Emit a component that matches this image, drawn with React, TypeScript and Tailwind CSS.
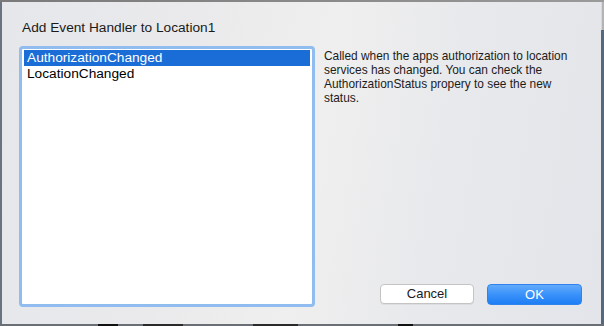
import React from "react";

export default function App() {
  const font = { fontFamily: '"Liberation Sans", Arial, Helvetica, sans-serif' };
  return (
    <div className="w-[604px] h-[326px] flex flex-col overflow-hidden bg-[#5c6672]" style={font}>
      <div className="h-[2px] bg-[linear-gradient(90deg,#7a7a7a,#8c8c8c_60%,#9a9a9a)]" />
      <div className="flex flex-1 min-h-0">
        <div className="w-[2px] bg-[#6a7480]" />
        <div className="w-[599px] flex flex-col pt-[18px] pl-[17px] pr-[19px] pb-[17px] bg-[linear-gradient(100deg,#e5e7eb_0%,#eaeaec_30%,#efefef_52%,#e8e9ec_72%,#e3e5ea_100%)]">
          <div className="ml-[3px] text-[13.7px] leading-[16px] text-[#1a1a1a]">
            Add Event Handler to Location1
          </div>
          <div className="flex flex-1 mt-[10px] min-h-0">
            <div className="w-[296px] shrink-0 h-full border-[3px] border-[#90bcef] rounded-[4px] bg-white px-[2px] py-[1px]">
              <div className="h-[16px] bg-[#1a6dd6] text-white text-[13.7px] leading-[16px] pl-[3px]">
                AuthorizationChanged
              </div>
              <div className="h-[16px] text-black text-[13.7px] leading-[16px] pl-[3px]">
                LocationChanged
              </div>
            </div>
            <div className="flex-1 min-w-0 flex flex-col pl-[9px] pt-[3px] pb-[2px]">
              <p className="w-[252px] text-[11.9px] leading-[14px] text-[#1c1c1c]">
                Called when the apps authorization to location services has changed. You can check the AuthorizationStatus propery to see the new status.
              </p>
              <div className="mt-auto flex justify-end gap-[13px]">
                <button className="w-[94px] h-[20px] rounded-[4px] bg-white border border-[#c4c4c4] shadow-[0_1px_0_rgba(0,0,0,0.05)] text-[13px] leading-[18px] text-[#1a1a1a]">
                  Cancel
                </button>
                <button className="w-[95px] h-[21px] rounded-[4px] border border-[#2f83ec] bg-[linear-gradient(180deg,#62aafc_0%,#3a92fa_50%,#1e7ef5_100%)] text-[13px] leading-[19px] text-white">
                  OK
                </button>
              </div>
            </div>
          </div>
        </div>
        <div className="w-[3px] flex flex-col">
          <div className="h-[28px] bg-[#b4b4b4] border-l border-[#d8d8d8]" />
          <div className="flex-1 bg-[#56687b]" />
        </div>
      </div>
      <div className="h-[2px] flex bg-[#6a6f76]">
        <div className="w-[98px]" />
        <div className="w-[20px] bg-[#111]" />
        <div className="w-[25px]" />
        <div className="w-[40px] bg-[#2a2a2a]" />
        <div className="w-[70px]" />
        <div className="w-[45px] bg-[#2a2a2a]" />
        <div className="w-[100px]" />
        <div className="w-[15px] bg-[#111]" />
      </div>
    </div>
  );
}
